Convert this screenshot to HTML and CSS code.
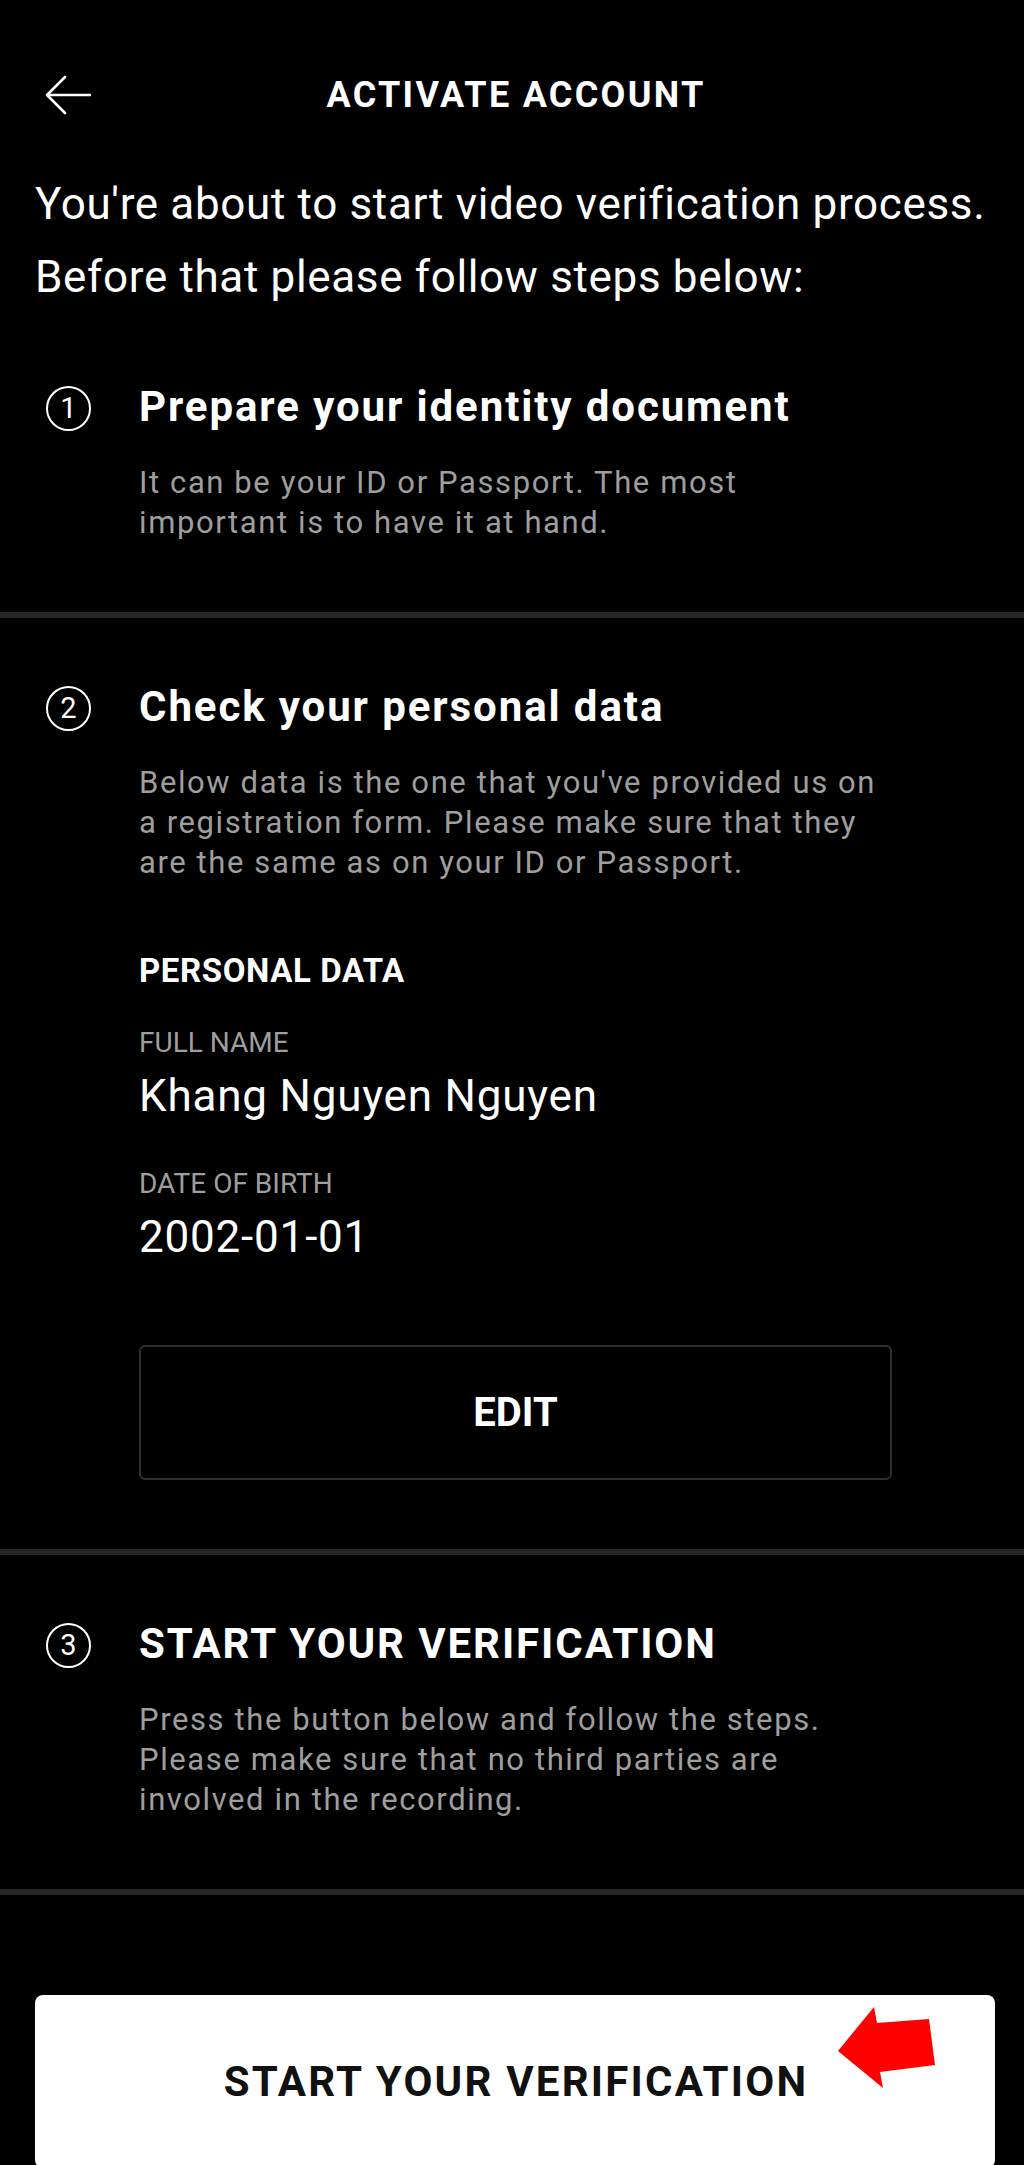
FILE: index.html
```html
<!DOCTYPE html>
<html lang="en">
<head>
<meta charset="utf-8">
<title>Activate account</title>
<link rel="stylesheet" href="styles.css">
</head>
<body>
<header class="header">
  <div class="back">
    <svg width="46" height="40" viewBox="0 0 46 40" aria-hidden="true">
      <path d="M2 20 H45 M20 2 L2 20 L20 38" fill="none" stroke="#fff" stroke-width="2.6" stroke-linecap="round" stroke-linejoin="round"/>
    </svg>
  </div>
  <h1 class="title">ACTIVATE ACCOUNT</h1>
  <div></div>
</header>

<p class="intro">You're about to start video verification process.<br>Before that please follow steps below:</p>

<section class="step">
  <span class="num">1</span>
  <div class="body">
    <h2 class="step-title">Prepare your identity document</h2>
    <p class="step-desc">It can be your ID or Passport. The most<br>important is to have it at hand.</p>
  </div>
</section>

<section class="step">
  <span class="num">2</span>
  <div class="body">
    <h2 class="step-title">Check your personal data</h2>
    <p class="step-desc">Below data is the one that you've provided us on<br>a registration form. Please make sure that they<br>are the same as on your ID or Passport.</p>
    <h3 class="pd-head">PERSONAL DATA</h3>
    <div class="field">
      <div class="label">FULL NAME</div>
      <div class="value">Khang Nguyen Nguyen</div>
    </div>
    <div class="field second">
      <div class="label">DATE OF BIRTH</div>
      <div class="value">2002-01-01</div>
    </div>
    <div class="edit">EDIT</div>
  </div>
</section>

<section class="step">
  <span class="num">3</span>
  <div class="body">
    <h2 class="step-title">START YOUR VERIFICATION</h2>
    <p class="step-desc">Press the button below and follow the steps.<br>Please make sure that no third parties are<br>involved in the recording.</p>
  </div>
</section>

<div class="footer">
  <div class="start">
    <span class="start-label">START YOUR VERIFICATION</span>
    <svg class="pointer" width="104" height="90" viewBox="0 0 104 90" aria-hidden="true">
      <polygon points="3,48 39,4 42,20 94,16 100,62 45,69 48,85" fill="#ff0000"/>
    </svg>
  </div>
</div>
</body>
</html>
```

FILE: styles.css
```css
html, body {
  margin: 0;
  padding: 0;
  background: #000;
}

body {
  color: #fff;
  font-family: Roboto, "Noto Sans", "Liberation Sans", sans-serif;
  width: 1024px;
  height: 2165px;
  overflow: hidden;
}

.header {
  display: grid;
  grid-template-columns: 1fr auto 1fr;
  align-items: center;
  padding-top: 60px;
  height: 70px;
}

.back {
  padding-left: 45px;
  display: flex;
  align-items: center;
}

.back svg {
  display: block;
}

.title {
  margin: 0 0 0 8px;
  font-size: 36px;
  line-height: 70px;
  font-weight: 700;
  letter-spacing: 2.3px;
  white-space: nowrap;
}

.intro {
  margin: 38px 0 3px 35px;
  font-size: 44px;
  line-height: 73px;
  font-weight: 400;
  letter-spacing: 0.65px;
  white-space: nowrap;
}

.step {
  display: flex;
  align-items: flex-start;
  padding: 65px 0 69px;
  border-bottom: 6px solid #262626;
}

.num {
  flex: none;
  box-sizing: border-box;
  width: 45px;
  height: 45px;
  margin: 4px 0 0 46px;
  border: 2px solid #fff;
  border-radius: 50%;
  display: flex;
  align-items: center;
  justify-content: center;
  font-size: 29px;
  font-weight: 400;
  line-height: 1;
}

.body {
  margin-left: 48px;
  flex: 1;
}

.step-title {
  margin: 0;
  font-size: 42px;
  line-height: 50px;
  font-weight: 700;
  letter-spacing: 1.9px;
  white-space: nowrap;
}

.step-desc {
  margin: 31px 0 0;
  font-size: 31px;
  line-height: 40px;
  color: #9e9e9e;
  letter-spacing: 1.6px;
  white-space: nowrap;
}

.pd-head {
  margin: 68px 0 0;
  font-size: 33px;
  line-height: 40px;
  font-weight: 700;
  letter-spacing: 0.6px;
}

.field {
  margin-top: 35px;
}

.field.second {
  margin-top: 45px;
}

.label {
  font-size: 28px;
  line-height: 34px;
  color: #9e9e9e;
}

.value {
  margin-top: 10px;
  font-size: 44px;
  line-height: 52px;
  letter-spacing: 0.8px;
}

.edit {
  box-sizing: border-box;
  margin-top: 82px;
  width: 753px;
  height: 135px;
  border: 2px solid #2e2e30;
  border-radius: 6px;
  display: flex;
  align-items: center;
  justify-content: center;
  font-size: 40px;
  font-weight: 700;
}

.step + .step {
  padding-top: 64px;
}

.footer {
  padding: 100px 29px 0 35px;
}

.start {
  position: relative;
  height: 173px;
  background: #fff;
  border-radius: 8px;
  color: #111;
  display: flex;
  align-items: center;
  justify-content: center;
  font-size: 42px;
  font-weight: 700;
}

.start-label {
  letter-spacing: 2.2px;
  margin-left: 2px;
}

.pointer {
  position: absolute;
  left: 800px;
  top: 8px;
}
```
